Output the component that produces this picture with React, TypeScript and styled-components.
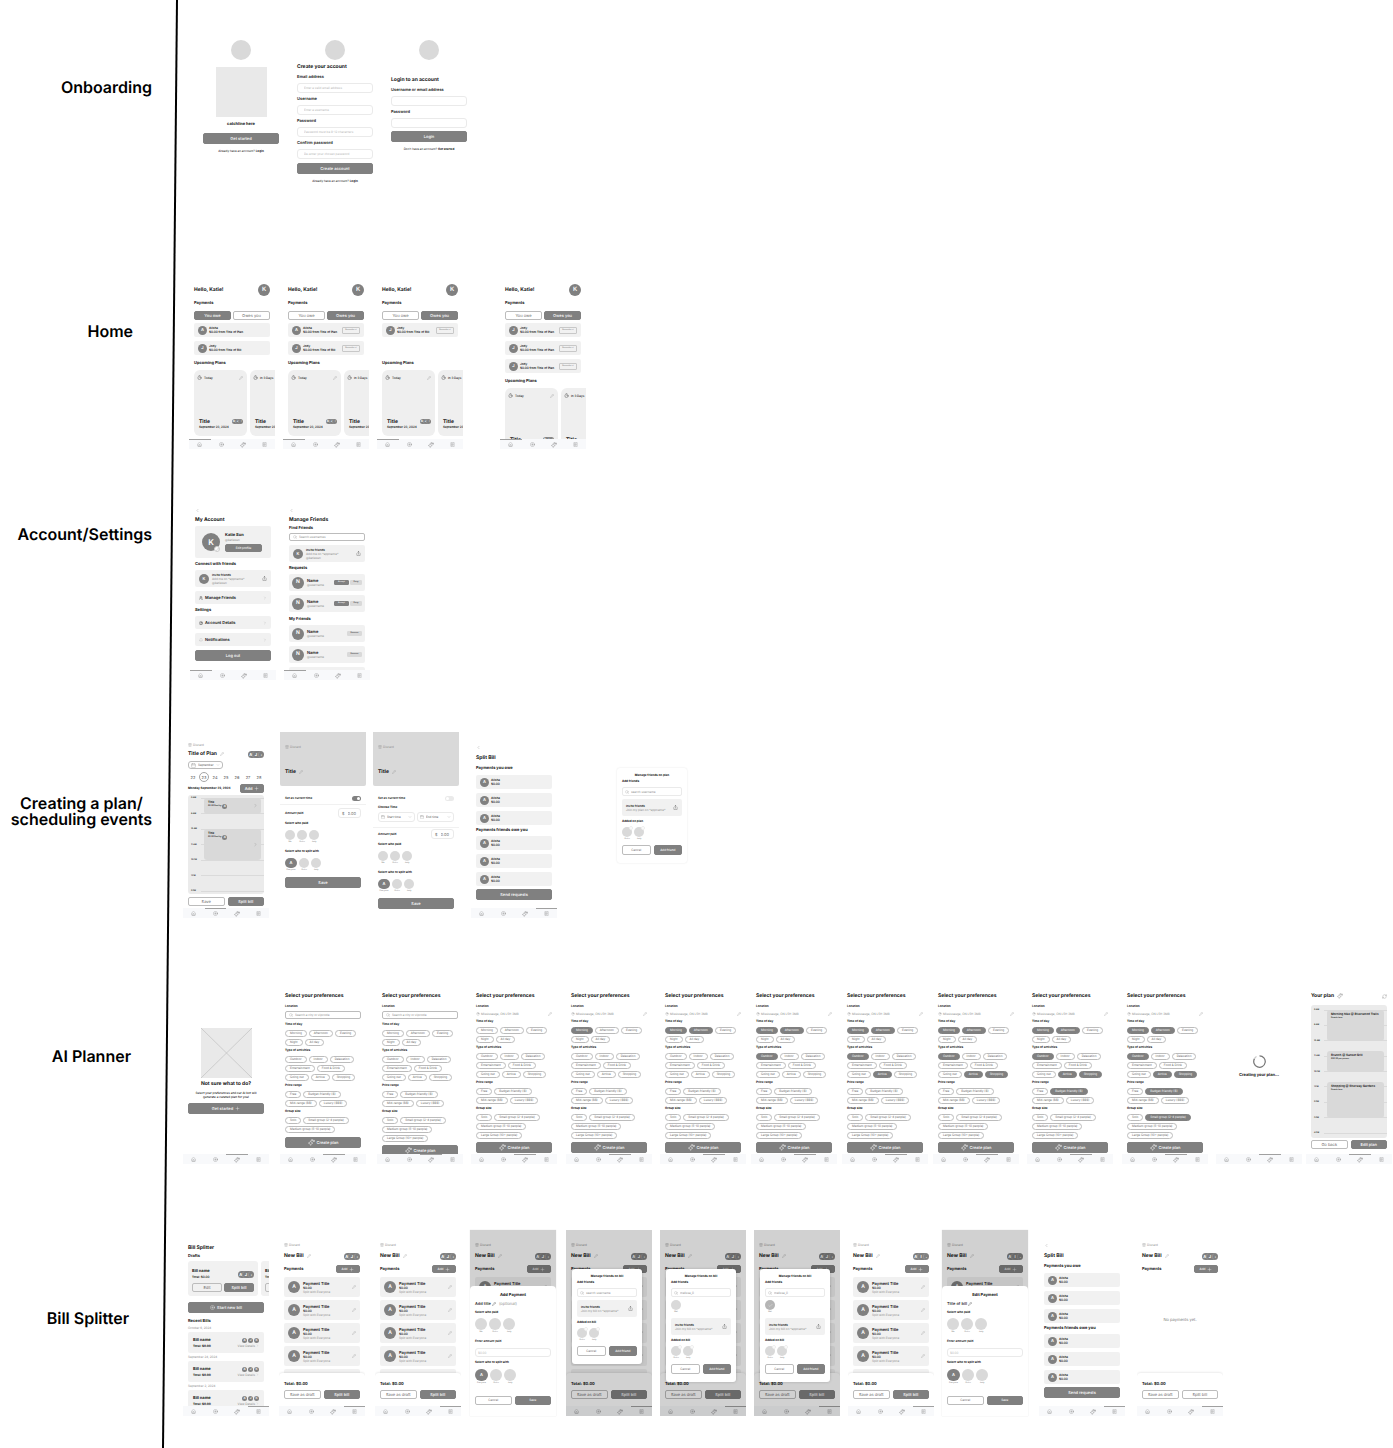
import React from 'react';
import styled, { createGlobalStyle, css } from 'styled-components';
import {
  Bell, Calendar, Check, ChevronDown, ChevronLeft, ChevronRight, CirclePlus, CircleUser,
  House, MapPin, Pencil, Plus, ReceiptText, RefreshCw, Search, Share, Timer, Trash2, Users,
} from 'lucide-react';

const color = {
  ink: '#111111',
  soft: '#8c8c8c',
  dark: '#808080',
  mid: '#d9d9d9',
  panel: '#ebebeb',
  card: '#f1f1f1',
  line: '#eaeaea',
  outline: '#bcbcbc',
  nav: '#f8f9fb',
};

const GlobalStyle = createGlobalStyle`
  *, *::before, *::after { box-sizing: border-box; }
  body { margin: 0; background: #ffffff; }
  h1, h2, h3, h4, p { margin: 0; padding: 0; font-weight: inherit; }
  button, input, select { font: inherit; color: inherit; text-rendering: inherit; margin: 0; padding: 0; border: 0; background: none; }
  svg { display: block; flex: none; }
  svg.lucide { stroke-width: 1.5; }
`;

/* ---------- board ---------- */

const Board = styled.main`
  position: relative;
  display: flex;
  flex-direction: column;
  padding: 20px 0 32px;
  overflow: hidden;
  font-family: Inter, "Liberation Sans", sans-serif;
  color: ${color.ink};
  text-rendering: geometricPrecision;
`;

const Divider = styled.svg`
  position: absolute;
  top: 0;
  left: 162px;
  width: 16px;
  height: 100%;
`;

const Flow = styled.section<{ $above?: number; $start: number }>`
  display: grid;
  grid-template-columns: ${(p) => p.$start}px 1fr;
  margin-top: ${(p) => p.$above ?? 0}px;
`;

const FlowName = styled.h2<{ $drop: number; $inset?: number; $edge: number }>`
  justify-self: end;
  padding-top: ${(p) => p.$drop}px;
  padding-right: ${(p) => p.$edge + (p.$inset ?? 0)}px;
  font-size: 16px;
  line-height: 16px;
  font-weight: 600;
  text-align: center;
  white-space: pre;
  color: #000000;
`;

const Frames = styled.div`
  display: flex;
  align-items: flex-start;
`;

const Phone = styled.article<{ $gap?: number; $edged?: boolean }>`
  position: relative;
  display: flex;
  flex: none;
  flex-direction: column;
  width: 86px;
  height: 186px;
  margin-left: ${(p) => p.$gap ?? 0}px;
  overflow: hidden;
  background: #ffffff;
  box-shadow: ${(p) => (p.$edged ? `0 0 1px ${color.mid}` : 'none')};
`;

const Body = styled.div<{ $top: number; $bottom?: number }>`
  display: flex;
  flex: 1;
  flex-direction: column;
  min-height: 0;
  padding: ${(p) => p.$top}px 5px ${(p) => p.$bottom ?? 0}px;
  overflow: hidden;
  & > * { flex-shrink: 0; }
`;

/* ---------- text ---------- */

const spaced = css<{ $mt?: number }>`
  margin-top: ${(p) => p.$mt ?? 0}px;
`;

const Title = styled.h3<{ $mt?: number }>`
  ${spaced}
  display: flex;
  align-items: center;
  gap: 3px;
  font-size: 5px;
  line-height: 8px;
  font-weight: 700;
  white-space: nowrap;
`;

const Heading = styled.h4<{ $mt?: number; $center?: boolean }>`
  ${spaced}
  font-size: 4px;
  line-height: 6px;
  font-weight: 700;
  white-space: nowrap;
  text-align: ${(p) => (p.$center ? 'center' : 'left')};
`;

const Caption = styled.p<{ $mt?: number; $center?: boolean; $large?: boolean }>`
  ${spaced}
  font-size: ${(p) => (p.$large ? 4 : 3)}px;
  line-height: 5px;
  font-weight: 700;
  white-space: nowrap;
  text-align: ${(p) => (p.$center ? 'center' : 'left')};
`;

const Note = styled.p<{ $mt?: number }>`
  ${spaced}
  display: flex;
  align-items: center;
  gap: 1px;
  font-size: 3px;
  line-height: 4px;
  white-space: nowrap;
  text-decoration: none;
  color: ${color.soft};
`;

const Prompt = styled.p<{ $mt?: number }>`
  ${spaced}
  font-size: 3px;
  line-height: 6px;
  text-align: center;
  white-space: nowrap;
`;

const Pitch = styled(Prompt)`
  line-height: 4px;
  font-weight: 500;
  white-space: pre-line;
`;

const TextLink = styled.a`
  color: inherit;
  font-weight: 700;
  text-decoration: none;
`;

const Spread = styled.div<{ $mt?: number; $h: number }>`
  ${spaced}
  display: flex;
  align-items: center;
  justify-content: space-between;
  height: ${(p) => p.$h}px;
`;

const Stack = styled.div<{ $mt?: number; $gap?: number }>`
  ${spaced}
  display: flex;
  flex-direction: column;
  gap: ${(p) => p.$gap ?? 0}px;
`;

/* ---------- controls ---------- */

const Button = styled.button<{ $mt?: number; $tall?: number; $plain?: boolean; $w?: number; $small?: boolean }>`
  ${spaced}
  display: flex;
  flex: ${(p) => (p.$w ? 'none' : '1 1 0')};
  align-items: center;
  justify-content: center;
  gap: 2px;
  width: ${(p) => (p.$w ? `${p.$w}px` : 'auto')};
  height: ${(p) => p.$tall ?? 9}px;
  border: 1px solid ${(p) => (p.$plain ? color.outline : color.dark)};
  border-radius: 2px;
  background: ${(p) => (p.$plain ? 'transparent' : color.dark)};
  color: ${(p) => (p.$plain ? '#666666' : '#ffffff')};
  font-size: ${(p) => (p.$small ? 3 : 4)}px;
  line-height: 5px;
  font-weight: ${(p) => (p.$plain ? 400 : 500)};
  white-space: nowrap;
`;

const WideButton = styled(Button)`
  flex: none;
  height: 11px;
`;

const ButtonRow = styled.div<{ $mt?: number; $gap?: number }>`
  ${spaced}
  display: flex;
  gap: ${(p) => p.$gap ?? 3}px;
`;

const MiniButton = styled.button<{ $fill?: string; $w: number; $h?: number }>`
  width: ${(p) => p.$w}px;
  height: ${(p) => p.$h ?? 5}px;
  border: 1px solid ${(p) => p.$fill ?? '#c8c8c8'};
  border-radius: 1px;
  background: ${(p) => p.$fill ?? 'transparent'};
  color: ${(p) => (p.$fill === color.dark ? '#ffffff' : p.$fill ? '#444444' : color.soft)};
  font-size: 2px;
  line-height: 3px;
  font-weight: 600;
  white-space: nowrap;
`;

const IconButton = styled.button`
  display: flex;
  align-items: center;
  justify-content: center;
  color: ${color.soft};
`;

const BackButton = styled(IconButton)`
  align-self: flex-start;
  height: 5px;
`;

const FieldBox = styled.label<{ $mt?: number; $large?: boolean }>`
  ${spaced}
  display: flex;
  flex-direction: column;
  gap: 4px;
  font-size: ${(p) => (p.$large ? 4 : 3)}px;
  line-height: 5px;
  font-weight: 600;
`;

const TextInput = styled.input<{ $h?: number }>`
  width: 100%;
  height: ${(p) => p.$h ?? 10}px;
  padding: 0 6px;
  border: 1px solid ${color.line};
  border-radius: 3px;
  font-size: 3px;
  font-weight: 400;
  &::placeholder { color: #b5b5b5; opacity: 1; }
`;

const AmountField = styled(TextInput)`
  padding: 0 2px;
`;

const SearchShell = styled.label<{ $mt?: number; $h?: number; $faint?: boolean }>`
  ${spaced}
  display: flex;
  align-items: center;
  gap: 2px;
  height: ${(p) => p.$h ?? 8}px;
  padding: 0 ${(p) => (p.$faint ? 2 : 3)}px;
  border: 1px solid ${(p) => (p.$faint ? color.line : color.outline)};
  border-radius: 2px;
  color: ${color.soft};
`;

const SearchInput = styled.input`
  flex: 1;
  min-width: 0;
  height: 4px;
  font-size: 3px;
  line-height: 4px;
  &::placeholder { color: ${color.soft}; opacity: 1; }
`;

const Chip = styled.button<{ $on?: boolean }>`
  height: 7px;
  padding: 0 4px;
  border: 1px solid ${(p) => (p.$on ? color.dark : color.outline)};
  border-radius: 4px;
  background: ${(p) => (p.$on ? color.dark : 'transparent')};
  color: ${(p) => (p.$on ? '#ffffff' : '#666666')};
  font-size: 3px;
  line-height: 5px;
  white-space: nowrap;
`;

const ChipWrap = styled.div`
  display: flex;
  flex-wrap: wrap;
  gap: 2px;
  margin: 3px -2px 0 0;
`;

const SelectShell = styled.label<{ $w: number; $h: number; $faint?: boolean; $mt?: number }>`
  ${spaced}
  display: flex;
  align-items: center;
  gap: 2px;
  width: ${(p) => p.$w}px;
  height: ${(p) => p.$h}px;
  padding: 0 2px;
  border: 1px solid ${(p) => (p.$faint ? color.line : color.outline)};
  border-radius: 3px;
  color: ${color.soft};
`;

const SelectInput = styled.select`
  flex: 1;
  min-width: 0;
  height: 4px;
  appearance: none;
  color: #555555;
  font-size: 3px;
  line-height: 4px;
`;

const SwitchInput = styled.input`
  appearance: none;
  width: 9px;
  height: 5px;
  border-radius: 3px;
  background: ${color.line};
  &::before {
    content: '';
    display: block;
    width: 3px;
    height: 3px;
    margin: 1px;
    border-radius: 50%;
    background: #ffffff;
  }
  &:checked { background: ${color.dark}; }
  &:checked::before { margin-left: 5px; }
`;

const SwitchLabel = styled.label`
  display: flex;
  align-items: center;
  justify-content: space-between;
  height: 6px;
  margin-top: 9px;
  font-size: 3px;
  font-weight: 600;
`;

/* ---------- shapes ---------- */

const Disc = styled.span<{ $d: number; $fill?: string; $w?: number; $size?: number }>`
  position: relative;
  display: flex;
  flex: none;
  align-items: center;
  justify-content: center;
  width: ${(p) => p.$w ?? p.$d}px;
  height: ${(p) => p.$d}px;
  border-radius: ${(p) => p.$d}px;
  background: ${(p) => p.$fill ?? color.dark};
  color: #ffffff;
  font-size: ${(p) => p.$size ?? 4}px;
  line-height: ${(p) => p.$size ?? 4}px;
  font-weight: 600;
`;

const Dot = styled.span<{ $low?: boolean }>`
  position: absolute;
  right: ${(p) => (p.$low ? 0 : -1)}px;
  ${(p) => (p.$low ? 'bottom: -1px;' : 'top: -1px;')}
  display: flex;
  align-items: center;
  justify-content: center;
  width: ${(p) => (p.$low ? 6 : 4)}px;
  height: ${(p) => (p.$low ? 6 : 4)}px;
  border: 1px solid ${(p) => (p.$low ? '#cccccc' : '#eeeeee')};
  border-radius: 50%;
  background: #ffffff;
  color: ${color.soft};
`;

const Center = styled.div<{ $mt?: number }>`
  ${spaced}
  display: flex;
  justify-content: center;
`;

const Picture = styled.div`
  width: 51px;
  height: 50px;
  background: #e9e9e9;
`;

const Card = styled.div<{ $mt?: number; $h: number; $pad?: number; $gap?: number }>`
  ${spaced}
  display: flex;
  align-items: center;
  gap: ${(p) => p.$gap ?? 3}px;
  height: ${(p) => p.$h}px;
  padding: 0 ${(p) => p.$pad ?? 4}px;
  border-radius: 2px;
  background: ${color.card};
  font-size: 3px;
  line-height: 4px;
  white-space: nowrap;
`;

const Lines = styled.div`
  flex: 1;
  min-width: 0;
`;

const Strong = styled.p<{ $large?: boolean }>`
  font-size: ${(p) => (p.$large ? 4 : 3)}px;
  line-height: ${(p) => (p.$large ? 5 : 4)}px;
  font-weight: 600;
`;

const Soft = styled.p`
  color: ${color.soft};
`;

const Big = styled.p`
  font-size: 4px;
  line-height: 5px;
  font-weight: 700;
`;

const Rule = styled.hr<{ $mt: number }>`
  height: 1px;
  margin: ${(p) => p.$mt}px -5px 0;
  border: 0;
  background: #f1f1f1;
`;

/* ---------- icons drawn by hand ---------- */

const Sparkle = ({ size = 6, stroke = 'currentColor' }: { size?: number; stroke?: string }) => (
  <svg width={size} height={size} viewBox="0 0 24 24" fill="none" stroke={stroke} strokeWidth="1.500" strokeLinejoin="round">
    <path d="M9 6l2.400 5.600L17 14l-5.600 2.400L9 22l-2.400-5.600L1 14l5.600-2.400z" />
    <path d="M20 3l1 2.500 2.500 1-2.500 1-1 2.500-1-2.500-2.500-1 2.500-1z" />
    <path d="M14 1l1 2 2 1-2 1-1 2-1-2-2-1 2-1z" />
  </svg>
);

const Spinner = () => (
  <svg width="13" height="13" viewBox="0 0 26 26" fill="none" strokeWidth="2.500">
    <path d="M13 1.500A11.500 11.500 0 1 1 3 7.300" stroke="#777777" />
    <path d="M3 7.300A11.500 11.500 0 0 1 7 3.100" stroke="#c8c8c8" />
  </svg>
);

/* ---------- shared parts ---------- */

const NavBar = styled.nav`
  display: flex;
  flex: none;
  height: 10px;
  background: ${color.nav};
`;

const NavTab = styled.button<{ $on: boolean }>`
  display: flex;
  flex: 1;
  align-items: center;
  justify-content: center;
  border-top: 1px solid ${(p) => (p.$on ? '#a0a0a0' : 'transparent')};
  color: #7c7c7c;
`;

const Nav = ({ on }: { on: number }) => (
  <NavBar>
    <NavTab $on={on === 0} aria-label="Home"><House size={5} /></NavTab>
    <NavTab $on={on === 1} aria-label="Plans"><CirclePlus size={5} /></NavTab>
    <NavTab $on={on === 2} aria-label="AI planner"><Sparkle /></NavTab>
    <NavTab $on={on === 3} aria-label="Bills"><ReceiptText size={5} /></NavTab>
  </NavBar>
);

const Pill = styled.span<{ $small?: boolean }>`
  display: flex;
  flex: none;
  width: ${(p) => (p.$small ? 11 : 16)}px;
  height: ${(p) => (p.$small ? 5 : 7)}px;
  border-radius: 4px;
  background: ${color.dark};
  color: #ffffff;
  font-size: ${(p) => (p.$small ? 3 : 4)}px;
  line-height: ${(p) => (p.$small ? 5 : 7)}px;
  font-weight: 700;
`;

const PillPart = styled.span`
  flex: 1;
  border-radius: 4px 0 0 4px;
  text-align: center;
  & + & { box-shadow: -1px 0 0 #939393; }
`;

const AvatarStack = ({ small, names = ['A', 'J', ':'] }: { small?: boolean; names?: string[] }) => (
  <Pill $small={small}>{names.map((n) => <PillPart key={n}>{n}</PillPart>)}</Pill>
);

const Field = ({ label, hint, mt = 3 }: { label: string; hint?: string; mt?: number }) => (
  <FieldBox $mt={mt} $large>{label}<TextInput placeholder={hint} /></FieldBox>
);

const Discard = () => <Note as="button"><Trash2 size={4} />Discard</Note>;

const Edit = () => <IconButton aria-label="Edit"><Pencil size={4} /></IconButton>;

const PaymentRow = ({ name, text, remind }: { name: string; text: string; remind?: boolean }) => (
  <Card $h={14} $gap={2}>
    <Disc $d={9} $size={4}>{name[0]}</Disc>
    <Lines><Strong>{name}</Strong><Strong>{text}</Strong></Lines>
    {remind && <MiniButton $w={18} $h={7}>Reminder ✓</MiniButton>}
  </Card>
);

const PersonBox = styled.div`
  display: flex;
  flex-direction: column;
  align-items: center;
  font-size: 2px;
  line-height: 4px;
  color: #777777;
`;

const People = styled.div<{ $mt: number }>`
  ${spaced}
  display: flex;
  gap: 2px;
`;

const Persons = ({ names, d = 10, mt = 4, lead, removable }: {
  names: string[]; d?: number; mt?: number; lead?: boolean; removable?: boolean;
}) => (
  <People $mt={mt}>
    {names.map((n, i) => (
      <PersonBox key={n}>
        <Disc $d={d} $w={lead && i === 0 ? Math.max(12, d + 1) : d} $fill={lead && i === 0 ? color.dark : color.mid}>
          {lead && i === 0 ? 'A' : null}
          {removable && <Dot />}
        </Disc>
        {n}
      </PersonBox>
    ))}
  </People>
);

const InviteCard = ({ mt, lines, avatar }: { mt: number; lines: string[]; avatar?: boolean }) => (
  <Card $mt={mt} $h={17}>
    {avatar && <Disc $d={10}>K</Disc>}
    <Lines>
      <Strong>Invite friends</Strong>
      {lines.map((l) => <Soft key={l}>{l}</Soft>)}
    </Lines>
    <IconButton aria-label="Share"><Share size={5} color="#333333" /></IconButton>
  </Card>
);

/* ---------- onboarding ---------- */

const Onboarding = () => (
  <>
    <Phone>
      <Body $top={20}>
        <Center><Disc $d={20} $fill={color.mid} /></Center>
        <Center $mt={7}><Picture /></Center>
        <Caption $mt={4} $center $large>catchline here</Caption>
        <WideButton $mt={7}>Get started</WideButton>
        <Prompt $mt={4}>Already have an account? <TextLink href="#login">Login</TextLink></Prompt>
      </Body>
    </Phone>
    <Phone $gap={8}>
      <Body $top={20}>
        <Center><Disc $d={20} $fill={color.mid} /></Center>
        <Title $mt={3}>Create your account</Title>
        <Field label="Email address" hint="Enter a valid email address" />
        <Field label="Username" hint="Enter a username" />
        <Field label="Password" hint="Password must be 8-12 characters" />
        <Field label="Confirm password" hint="Re-enter your chosen password" />
        <WideButton $mt={4}>Create account</WideButton>
        <Prompt $mt={4}>Already have an account? <TextLink href="#login">Login</TextLink></Prompt>
      </Body>
    </Phone>
    <Phone $gap={8}>
      <Body $top={20}>
        <Center><Disc $d={20} $fill={color.mid} /></Center>
        <Title $mt={16}>Login to an account</Title>
        <Field label="Username or email address" />
        <Field label="Password" />
        <WideButton $mt={3}>Login</WideButton>
        <Prompt $mt={4}>Don&apos;t have an account? <TextLink href="#start">Get started</TextLink></Prompt>
      </Body>
    </Phone>
  </>
);

/* ---------- home ---------- */

const PlanStrip = styled.div`
  display: flex;
  gap: 3px;
  margin-top: 4px;
`;

const PlanCard = styled.div`
  display: flex;
  flex: none;
  flex-direction: column;
  width: 53px;
  height: 66px;
  padding: 5px 4px 7px 3px;
  border-radius: 6px;
  background: #efefef;
  font-size: 3px;
  line-height: 4px;
  white-space: nowrap;
`;

const PlanWhen = styled.p`
  display: flex;
  align-items: center;
  gap: 2px;
  font-weight: 500;
  & > button { margin-left: auto; }
`;

const PlanFoot = styled.div`
  margin-top: auto;
  padding-left: 2px;
`;

const HomeList = styled(Stack)`
  min-height: 32px;
`;

const Plan = ({ when, people }: { when: string; people?: boolean }) => (
  <PlanCard>
    <PlanWhen><Timer size={5} />{when}<Edit /></PlanWhen>
    <PlanFoot>
      <Spread $h={7}><Title>Title</Title>{people && <AvatarStack small />}</Spread>
      <Strong>September 23, 2024</Strong>
    </PlanFoot>
  </PlanCard>
);

const Home = ({ gap, owed, rows }: { gap?: number; owed?: boolean; rows: [string, string][] }) => (
  <Phone $gap={gap}>
    <Body $top={21}>
      <Spread $h={12}><Title>Hello, Katie!</Title><Disc $d={12} $size={6}>K</Disc></Spread>
      <Heading $mt={4}>Payments</Heading>
      <ButtonRow $mt={5} $gap={2}>
        <Button $plain={owed}>You owe</Button>
        <Button $plain={!owed}>Owes you</Button>
      </ButtonRow>
      <HomeList $mt={3} $gap={4}>
        {rows.map(([n, t], i) => <PaymentRow key={i} name={n} text={t} remind={owed} />)}
      </HomeList>
      <Heading $mt={5}>Upcoming Plans</Heading>
      <PlanStrip><Plan when="Today" people /><Plan when="In 3 Days" /></PlanStrip>
    </Body>
    <Nav on={0} />
  </Phone>
);

const fromPlan = '$0.00 from Title of Plan';
const fromBill = '$0.00 from Title of Bill';

/* ---------- account ---------- */

const ProfileLines = styled.div`
  display: flex;
  flex: 1;
  flex-direction: column;
  gap: 1px;
`;

const Push = styled.span`
  margin-left: auto;
`;

const LinkCard = ({ icon, text, mt }: { icon: React.ReactNode; text: string; mt: number }) => (
  <Card as="button" $mt={mt} $h={13} $gap={2}>
    {icon}
    <Strong as="span" $large>{text}</Strong>
    <Push><ChevronRight size={4} color="#999999" /></Push>
  </Card>
);

const Account = () => (
  <Phone>
    <Body $top={14}>
      <BackButton aria-label="Back"><ChevronLeft size={5} /></BackButton>
      <Title $mt={3}>My Account</Title>
      <Card $mt={2} $h={32} $pad={7} $gap={5}>
        <Disc $d={18} $size={8}>K<Dot $low><Pencil size={3} /></Dot></Disc>
        <ProfileLines>
          <Big>Katie Sun</Big>
          <Soft>@katiesun</Soft>
          <Button $tall={8} $w={37} $mt={1} $small>Edit profile</Button>
        </ProfileLines>
      </Card>
      <Heading $mt={3}>Connect with friends</Heading>
      <InviteCard mt={3} avatar lines={['Add me on *appname*', '@katiesun']} />
      <LinkCard mt={4} icon={<Users size={4} />} text="Manage Friends" />
      <Heading $mt={3}>Settings</Heading>
      <LinkCard mt={3} icon={<CircleUser size={4} />} text="Account Details" />
      <LinkCard mt={4} icon={<Bell size={4} color="#aaaaaa" />} text="Notifications" />
      <WideButton $mt={4}>Log out</WideButton>
    </Body>
    <Nav on={0} />
  </Phone>
);

const FriendCard = ({ mt, request }: { mt: number; request?: boolean }) => (
  <Card $mt={mt} $h={17} $pad={3}>
    <Disc $d={12} $size={5}>N</Disc>
    <Lines><Strong $large>Name</Strong><Soft>@username</Soft></Lines>
    <ButtonRow $gap={1}>
      {request && <MiniButton $w={15} $fill={color.dark}>Accept</MiniButton>}
      <MiniButton $w={request ? 12 : 15} $fill={color.mid}>{request ? 'Deny' : 'Remove'}</MiniButton>
    </ButtonRow>
  </Card>
);

const ManageFriends = () => (
  <Phone $gap={8}>
    <Body $top={14}>
      <BackButton aria-label="Back"><ChevronLeft size={5} /></BackButton>
      <Title $mt={3}>Manage Friends</Title>
      <Heading $mt={1}>Find Friends</Heading>
      <SearchShell $mt={2}><Search size={4} /><SearchInput aria-label="Search" placeholder="Search usernames" /></SearchShell>
      <InviteCard mt={4} avatar lines={['Add me on *appname*', '@katiesun']} />
      <Heading $mt={3}>Requests</Heading>
      <FriendCard mt={3} request />
      <FriendCard mt={4} request />
      <Heading $mt={4}>My Friends</Heading>
      <FriendCard mt={3} />
      <FriendCard mt={4} />
      <Card $mt={4} $h={17} />
    </Body>
    <Nav on={0} />
  </Phone>
);

/* ---------- plans ---------- */

const Days = styled.div`
  display: flex;
  align-items: center;
  justify-content: space-between;
  height: 10px;
  margin-top: 3px;
`;

const Day = styled.button<{ $on?: boolean }>`
  width: 10px;
  height: 10px;
  border: 1px solid ${(p) => (p.$on ? '#a6a6a6' : 'transparent')};
  border-radius: 50%;
  color: #666666;
  font-size: 4px;
  line-height: 5px;
`;

/* Three grid rows make one hour. */
const Timeline = styled.div<{ $hours: number; $mt: number; $top: number; $bottom: number }>`
  ${spaced}
  display: grid;
  flex: 1;
  grid-template-columns: 12px 1fr;
  grid-template-rows: repeat(${(p) => p.$hours * 3}, 1fr);
  min-height: 0;
  padding: ${(p) => p.$top}px 0 ${(p) => p.$bottom}px 3px;
  border-radius: 3px;
  background: ${color.panel};
  overflow: hidden;
`;

const Hour = styled.span<{ $at: number }>`
  grid-area: ${(p) => p.$at * 3 + 1} / 1 / span 1 / 3;
  display: flex;
  align-items: center;
  gap: 3px;
  height: 4px;
  margin-top: -2px;
  font-size: 2px;
  line-height: 4px;
  font-weight: 600;
  white-space: nowrap;
  &::after { content: ''; flex: 1; height: 1px; background: #dadada; }
`;

const HourText = styled.span`
  width: 7px;
`;

const Event = styled.div<{ $from: number; $to: number }>`
  grid-area: ${(p) => p.$from} / 2 / ${(p) => p.$to} / 3;
  z-index: 1;
  display: flex;
  align-items: center;
  justify-content: space-between;
  min-height: 0;
  margin: 0 3px 0 1px;
  padding: 2px 3px 2px 4px;
  border-radius: 3px;
  background: ${color.mid};
  font-size: 3px;
  line-height: 5px;
  white-space: nowrap;
`;

const EventText = styled.div`
  align-self: flex-start;
`;

const EventNote = styled.p`
  display: flex;
  align-items: center;
  gap: 1px;
  font-size: 2px;
  line-height: 5px;
  font-weight: 600;
`;

const Hours = ({ names }: { names: string[] }) => (
  <>{names.map((n, i) => <Hour key={n} $at={i}><HourText>{n}</HourText></Hour>)}</>
);

const PaidEvent = ({ from, to }: { from: number; to: number }) => (
  <Event $from={from} $to={to}>
    <EventText>
      <Strong>Title</Strong>
      <EventNote>$0.00 Paid by <Disc $d={5} $size={3}>A</Disc></EventNote>
    </EventText>
    <ChevronRight size={5} color="#888888" />
  </Event>
);

const PlanDay = () => (
  <Phone>
    <Body $top={11} $bottom={2}>
      <Discard />
      <Spread $mt={3} $h={8}><Title>Title of Plan <Edit /></Title><AvatarStack /></Spread>
      <SelectShell $mt={3} $w={35} $h={8}>
        <Calendar size={5} />
        <SelectInput aria-label="Month" defaultValue="September"><option>September</option></SelectInput>
        <ChevronDown size={4} />
      </SelectShell>
      <Days>{[22, 23, 24, 25, 26, 27, 28].map((d) => <Day key={d} $on={d === 23}>{d}</Day>)}</Days>
      <Spread $mt={2} $h={9}>
        <Caption>Monday September 23, 2024</Caption>
        <Button $w={24}>Add <Plus size={5} /></Button>
      </Spread>
      <Timeline $mt={2} $top={3} $bottom={1} $hours={6}>
        <Hours names={['8 AM', '9 AM', '10 AM', '11 AM', '12 PM', '1 PM', '2 PM']} />
        <PaidEvent from={1} to={4} />
        <PaidEvent from={7} to={13} />
      </Timeline>
      <ButtonRow $mt={3}><Button $plain>Save</Button><Button>Split bill</Button></ButtonRow>
    </Body>
    <Nav on={1} />
  </Phone>
);

const Cover = styled.div`
  flex: none;
  height: 54px;
  padding: 13px 5px 0;
  border-radius: 0 0 2px 2px;
  background: ${color.mid};
`;

const Amount = styled.label<{ $mt: number }>`
  ${spaced}
  display: flex;
  align-items: center;
  justify-content: space-between;
  font-size: 3px;
  font-weight: 600;
`;

const AmountBox = styled.span`
  display: flex;
  align-items: center;
  gap: 3px;
  width: 23px;
  height: 10px;
  padding: 0 3px;
  border: 1px solid ${color.line};
  border-radius: 3px;
  color: #777777;
  font-size: 4px;
  font-weight: 400;
`;

const AmountInput = styled.input`
  flex: 1;
  min-width: 0;
  height: 6px;
`;

const PlanItem = ({ gap, timed }: { gap: number; timed?: boolean }) => (
  <Phone $gap={gap}>
    <Cover><Discard /><Title $mt={19}>Title <Edit /></Title></Cover>
    <Body $top={0}>
      <SwitchLabel>Set as current time<SwitchInput type="checkbox" role="switch" defaultChecked={!timed} /></SwitchLabel>
      {timed && (
        <>
          <Caption $mt={4}>Choose Time</Caption>
          <ButtonRow $mt={2} $gap={2}>
            {['Start time', 'End time'].map((t) => (
              <SelectShell key={t} $w={37} $h={10} $faint>
                <Calendar size={4} />
                <SelectInput aria-label={t} defaultValue={t}><option>{t}</option></SelectInput>
                <ChevronDown size={4} />
              </SelectShell>
            ))}
          </ButtonRow>
        </>
      )}
      <Rule $mt={timed ? 5 : 3} />
      <Amount $mt={timed ? 1 : 3}>Amount paid<AmountBox>$<AmountInput defaultValue="0.00" /></AmountBox></Amount>
      <Caption $mt={3}>Select who paid</Caption>
      <Persons names={['Me', 'Alisha', 'Jody']} />
      <Caption $mt={5}>Select who to split with</Caption>
      <Persons lead names={['Everyone', 'Alisha', 'Jody']} />
      <WideButton $mt={5}>Save</WideButton>
    </Body>
  </Phone>
);

const SplitBill = ({ gap }: { gap: number }) => (
  <Phone $gap={gap}>
    <Body $top={13}>
      <BackButton aria-label="Back"><ChevronLeft size={5} /></BackButton>
      <Title $mt={4}>Split Bill</Title>
      <Heading $mt={3}>Payments you owe</Heading>
      <Stack $mt={4} $gap={4}>{[1, 2, 3].map((i) => <PaymentRow key={i} name="Alisha" text="$0.00" />)}</Stack>
      <Heading $mt={2}>Payments friends owe you</Heading>
      <Stack $mt={3} $gap={4}>{[1, 2, 3].map((i) => <PaymentRow key={i} name="Alisha" text="$0.00" />)}</Stack>
      <WideButton $mt={3}>Send requests</WideButton>
    </Body>
    <Nav on={3} />
  </Phone>
);

const Dialog = styled.div<{ $alone?: boolean }>`
  display: flex;
  flex: none;
  flex-direction: column;
  width: 70px;
  padding: 5px 5px 8px;
  margin: ${(p) => (p.$alone ? '36px 0 0 60px' : '0')};
  border-radius: 3px;
  background: #ffffff;
  box-shadow: ${(p) => (p.$alone ? '0 0 2px #e4e4e4' : '0 0 3px rgba(0, 0, 0, 0.2)')};
`;

const FriendsDialog = ({ on, alone, query, picked }: { on: string; alone?: boolean; query?: string; picked?: boolean }) => (
  <Dialog $alone={alone}>
    <Caption $center>Manage friends on {on}</Caption>
    <Caption $mt={1}>Add friends</Caption>
    <SearchShell $mt={3} $h={9} $faint>
      <Search size={4} />
      <SearchInput aria-label="Search username" placeholder="search username" defaultValue={query} />
    </SearchShell>
    {query && (
      <People $mt={3}>
        <PersonBox>
          <Disc $d={10} $fill={picked ? '#b5b5b5' : color.mid}>{picked && <Check size={5} />}</Disc>
          Mel
        </PersonBox>
      </People>
    )}
    <InviteCard mt={query ? 4 : 3} lines={[`Join my ${on} on *appname*`]} />
    <Caption $mt={3}>Added on {on}</Caption>
    <Persons names={['Alisha', 'Jody']} mt={3} removable />
    <ButtonRow $mt={4}>
      <Button $plain $small $tall={10}>Cancel</Button>
      <Button $small $tall={10}>Add friend</Button>
    </ButtonRow>
  </Dialog>
);

/* ---------- AI planner ---------- */

const Blank = styled.svg`
  background: #e9e9e9;
`;

const PlannerIntro = () => (
  <Phone>
    <Body $top={50}>
      <Center>
        <Blank width="51" height="50" viewBox="0 0 51 50"><path d="M0 0L51 50M51 0L0 50" stroke="#b0b0b0" strokeWidth="0.500" /></Blank>
      </Center>
      <Center $mt={2}><Title>Not sure what to do?</Title></Center>
      <Pitch $mt={3}>{'Select your preferences and our AI bot will\ngenerate a curated plan for you!'}</Pitch>
      <WideButton $mt={4}>Get started <Plus size={5} /></WideButton>
    </Body>
    <Nav on={2} />
  </Phone>
);

const groups: [string, string[]][] = [
  ['Time of day', ['Morning', 'Afternoon', 'Evening', 'Night', 'All day']],
  ['Type of activities', ['Outdoor', 'Indoor', 'Relaxation', 'Entertainment', 'Food & Drink', 'Going out', 'Active', 'Shopping']],
  ['Price range', ['Free', 'Budget-friendly ($)', 'Mid-range ($$)', 'Luxury ($$$)']],
  ['Group size', ['Solo', 'Small group (2-4 people)', 'Medium group (5-10 people)', 'Large Group (10+ people)']],
];

const Place = styled(Note)`
  justify-content: space-between;
  height: 6px;
`;

const PlaceName = styled.span`
  display: flex;
  align-items: center;
  gap: 1px;
`;

const Preferences = ({ gap, picked = [], typing, short }: { gap: number; picked?: string[]; typing?: boolean; short?: boolean }) => (
  <Phone $gap={gap}>
    <Body $top={14}>
      <Title>Select your preferences</Title>
      <Caption $mt={4}>Location</Caption>
      {typing ? (
        <SearchShell $mt={2}><Search size={4} /><SearchInput aria-label="Location" placeholder="Search a city or zipcode" /></SearchShell>
      ) : (
        <Place as="div" $mt={2}><PlaceName><MapPin size={4} />Mississauga, ON L5H 3M8</PlaceName><Edit /></Place>
      )}
      {groups.map(([name, chips], i) => (
        <Stack key={name} $mt={i === 0 && typing ? 3 : 2}>
          <Caption>{name}</Caption>
          <ChipWrap>
            {chips.filter((c) => !(short && c.startsWith('Large'))).map((c) => (
              <Chip key={c} $on={picked.includes(c)} aria-pressed={picked.includes(c)}>{c}</Chip>
            ))}
          </ChipWrap>
        </Stack>
      ))}
      <WideButton $mt={short ? 4 : 3}><Sparkle size={7} />Create plan</WideButton>
    </Body>
    <Nav on={2} />
  </Phone>
);

const picks = ['Morning', 'Afternoon', 'Outdoor', 'Active', 'Shopping', 'Budget-friendly ($)', 'Small group (2-4 people)'];

const Planner = () => (
  <>
    <PlannerIntro />
    <Preferences gap={11} typing short />
    <Preferences gap={11} typing />
    <Preferences gap={8} />
    <Preferences gap={9} picked={picks.slice(0, 1)} />
    <Preferences gap={8} picked={picks.slice(0, 2)} />
    <Preferences gap={5} picked={picks.slice(0, 3)} />
    <Preferences gap={5} picked={picks.slice(0, 4)} />
    <Preferences gap={5} picked={picks.slice(0, 5)} />
    <Preferences gap={8} picked={picks.slice(0, 6)} />
    <Preferences gap={9} picked={picks} />
    <Phone $gap={8}>
      <Body $top={77}>
        <Center><Spinner /></Center>
        <Heading $mt={4} $center>Creating your plan...</Heading>
      </Body>
      <Nav on={2} />
    </Phone>
    <Phone $gap={4}>
      <Body $top={14} $bottom={5}>
        <Spread $h={8}>
          <Title>Your plan <Sparkle stroke="#888888" /></Title>
          <IconButton aria-label="Refresh"><RefreshCw size={5} /></IconButton>
        </Spread>
        <Timeline $mt={5} $top={5} $bottom={3} $hours={8}>
          <Hours names={['8 AM', '9 AM', '10 AM', '11 AM', '12 PM', '1 PM', '2 PM', '3 PM', '4 PM']} />
          <Event $from={1} $to={7}><EventText><Strong>Morning hike @ Riverwood Trails</Strong><EventNote>Details here</EventNote></EventText></Event>
          <Event $from={9} $to={13}><EventText><Strong>Brunch @ Sunset Grill</Strong><EventNote>$20.00 per person</EventNote></EventText></Event>
          <Event $from={15} $to={22}><EventText><Strong>Shopping @ Sherway Gardens</Strong><EventNote>Details here</EventNote></EventText></Event>
        </Timeline>
        <ButtonRow $mt={2}><Button $plain>Go back</Button><Button>Edit plan</Button></ButtonRow>
      </Body>
      <Nav on={2} />
    </Phone>
  </>
);

/* ---------- bills ---------- */

const DraftStrip = styled.div`
  display: flex;
  gap: 3px;
  margin-top: 2px;
`;

const DraftCard = styled.div`
  flex: none;
  width: 70px;
  height: 35px;
  padding: 7px 4px 0;
  border-radius: 3px;
  background: ${color.card};
  white-space: nowrap;
`;

const DraftText = styled.div`
  font-size: 3px;
  line-height: 6px;
  font-weight: 600;
`;

const Trio = styled.span`
  display: flex;
  justify-content: flex-end;
  gap: 1px;
`;

const BillCard = () => (
  <Card $mt={2} $h={21} $pad={5}>
    <Lines><Heading>Bill name</Heading><Caption $mt={1}>Total: $0.00</Caption></Lines>
    <Stack $gap={1}>
      <Trio>{['A', 'J', 'K'].map((n) => <Disc key={n} $d={5} $size={3}>{n}</Disc>)}</Trio>
      <Note as="a" href="#details">View Details <ChevronRight size={3} /></Note>
    </Stack>
  </Card>
);

const Draft = () => (
  <DraftCard>
    <Spread $h={12}>
      <DraftText><Heading>Bill name</Heading>Total: $0.00</DraftText>
      <AvatarStack />
    </Spread>
    <ButtonRow $mt={3} $gap={2}><Button $plain>Edit</Button><Button>Split bill</Button></ButtonRow>
  </DraftCard>
);

const BillHome = () => (
  <Phone>
    <Body $top={14}>
      <Title>Bill Splitter</Title>
      <Heading $mt={1}>Drafts</Heading>
      <DraftStrip><Draft /><Draft /></DraftStrip>
      <WideButton $mt={6}><CirclePlus size={5} />Start new bill</WideButton>
      <Heading $mt={5}>Recent Bills</Heading>
      {['October 6, 2024', 'September 24, 2024', 'September 2, 2024'].map((d) => (
        <Stack key={d} $mt={2}><Note>{d}</Note><BillCard /></Stack>
      ))}
    </Body>
    <Nav on={3} />
  </Phone>
);

const Footer = styled.div`
  flex: none;
  height: 33px;
  padding: 8px 5px 0;
  border-radius: 4px 4px 0 0;
  background: #ffffff;
  box-shadow: 0 -1px 2px rgba(0, 0, 0, 0.08);
`;

const Overlay = styled.div<{ $sheet?: boolean }>`
  position: absolute;
  inset: 0;
  display: flex;
  flex-direction: column;
  align-items: ${(p) => (p.$sheet ? 'stretch' : 'flex-start')};
  justify-content: ${(p) => (p.$sheet ? 'flex-end' : 'flex-start')};
  padding: ${(p) => (p.$sheet ? '0' : '39px 10px 0 6px')};
  background: rgba(0, 0, 0, 0.18);
`;

const Sheet = styled.div`
  display: flex;
  flex-direction: column;
  height: 130px;
  padding: 6px 5px 0;
  border-radius: 4px 4px 0 0;
  background: #ffffff;
`;

const SheetTitle = styled.p`
  display: flex;
  align-items: center;
  gap: 1px;
  margin-top: 3px;
  font-size: 4px;
  line-height: 6px;
  font-weight: 500;
  white-space: nowrap;
`;

const Optional = styled.span`
  margin-left: 2px;
  color: ${color.soft};
  font-weight: 400;
`;

const PaymentSheet = ({ title, name, optional }: { title: string; name: string; optional?: boolean }) => (
  <Overlay $sheet>
    <Sheet>
      <Heading $center>{title}</Heading>
      <SheetTitle>{name} <Pencil size={4} />{optional && <Optional>(optional)</Optional>}</SheetTitle>
      <Caption $mt={3}>Select who paid</Caption>
      <Persons names={['Me', 'Alisha', 'Jody']} d={12} mt={3} />
      <FieldBox $mt={5}>Enter amount paid<AmountField $h={9} placeholder="$0.00" /></FieldBox>
      <Caption $mt={3}>Select who to split with</Caption>
      <Persons lead names={['Everyone', 'Alisha', 'Jody']} d={12} />
      <ButtonRow $mt={11}><Button $plain $small>Cancel</Button><Button $small>Save</Button></ButtonRow>
    </Sheet>
  </Overlay>
);

const Empty = styled.p`
  margin-top: 44px;
  font-size: 4px;
  line-height: 6px;
  text-align: center;
  color: #777777;
`;

const NewBill = ({ gap, empty, names, children, edged }: {
  gap: number; empty?: boolean; names?: string[]; edged?: boolean; children?: React.ReactNode;
}) => (
  <Phone $gap={gap} $edged={edged}>
    <Body $top={13}>
      <Discard />
      <Spread $mt={5} $h={8}><Title>New Bill <Edit /></Title><AvatarStack names={names} /></Spread>
      <Spread $mt={5} $h={8}><Heading>Payments</Heading><Button $tall={8} $w={24} $small>Add <Plus size={5} /></Button></Spread>
      {empty ? <Empty>No payments yet.</Empty> : (
        <Stack $mt={4} $gap={3}>
          {[1, 2, 3, 4].map((i) => (
            <Card key={i} $h={20}>
              <Disc $d={12} $size={5}>A</Disc>
              <Lines><Strong $large>Payment Title</Strong><Strong>$0.00</Strong><Soft>Split with Everyone</Soft></Lines>
              <Edit />
            </Card>
          ))}
          <Card $h={20} />
        </Stack>
      )}
    </Body>
    <Footer>
      <Heading>Total: $0.00</Heading>
      <ButtonRow $mt={3}><Button $plain>Save as draft</Button><Button $plain={empty}>Split bill</Button></ButtonRow>
    </Footer>
    <Nav on={3} />
    {children}
  </Phone>
);

/* ---------- page ---------- */

export default function App() {
  return (
    <>
      <GlobalStyle />
      <Board>
        <Divider aria-hidden="true">
          <line x1="15" y1="0" x2="1" y2="100%" stroke="#000000" strokeWidth="2" />
        </Divider>

        <Flow $start={198}>
          <FlowName $drop={59} $edge={46}>Onboarding</FlowName>
          <Frames><Onboarding /></Frames>
        </Flow>

        <Flow $start={189} $above={57}>
          <FlowName $drop={60} $edge={37} $inset={19}>Home</FlowName>
          <Frames>
            <Home rows={[['Alisha', fromPlan], ['Jody', fromBill]]} />
            <Home gap={8} owed rows={[['Alisha', fromPlan], ['Jody', fromBill]]} />
            <Home gap={8} owed rows={[['Jody', fromBill]]} />
            <Home gap={37} owed rows={[['Jody', fromPlan], ['Jody', fromPlan], ['Jody', fromPlan]]} />
          </Frames>
        </Flow>

        <Flow $start={190} $above={45}>
          <FlowName $drop={32} $edge={38}>Account/Settings</FlowName>
          <Frames><Account /><ManageFriends /></Frames>
        </Flow>

        <Flow $start={183} $above={52}>
          <FlowName $drop={63} $edge={31}>{'Creating a plan/\nscheduling events'}</FlowName>
          <Frames>
            <PlanDay />
            <PlanItem gap={11} />
            <PlanItem gap={7} timed />
            <SplitBill gap={12} />
            <FriendsDialog on="plan" alone />
          </Frames>
        </Flow>

        <Flow $start={183} $above={60}>
          <FlowName $drop={70} $edge={31} $inset={21}>AI Planner</FlowName>
          <Frames><Planner /></Frames>
        </Flow>

        <Flow $start={183} $above={66}>
          <FlowName $drop={80} $edge={31} $inset={23}>Bill Splitter</FlowName>
          <Frames>
            <BillHome />
            <NewBill gap={10} />
            <NewBill gap={10} />
            <NewBill gap={9} edged><PaymentSheet title="Add Payment" name="Add title" optional /></NewBill>
            <NewBill gap={10}><Overlay><FriendsDialog on="bill" /></Overlay></NewBill>
            <NewBill gap={8}><Overlay><FriendsDialog on="bill" query="melissa_0" /></Overlay></NewBill>
            <NewBill gap={8}><Overlay><FriendsDialog on="bill" query="melissa_0" picked /></Overlay></NewBill>
            <NewBill gap={8} names={['A', 'I', '.']} />
            <NewBill gap={8} names={['A', 'I', '.']} edged><PaymentSheet title="Edit Payment" name="Title of bill" /></NewBill>
            <SplitBill gap={11} />
            <NewBill gap={12} empty />
          </Frames>
        </Flow>
      </Board>
    </>
  );
}
